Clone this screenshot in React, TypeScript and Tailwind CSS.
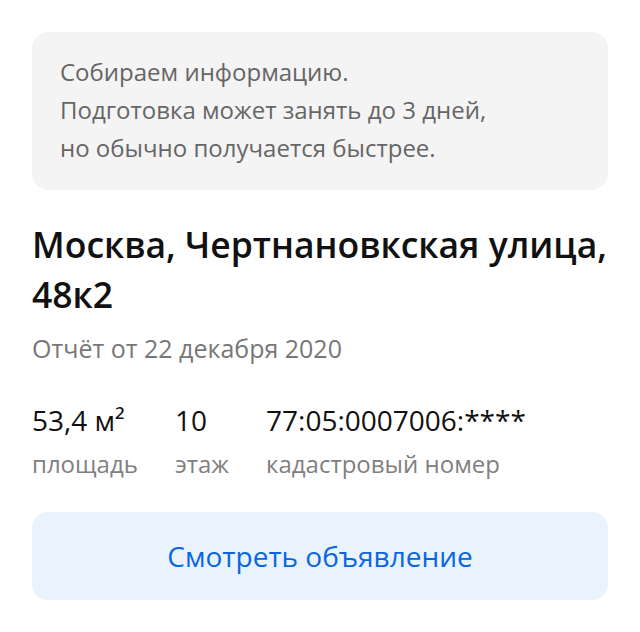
// Report card: status note, address, quick facts and a link to the listing

const stats = [
	{ value: "53,4 м²", label: "площадь" },
	{ value: "10", label: "этаж" },
	{ value: "77:05:0007006:****", label: "кадастровый номер" },
];

export default function App() {
	return (
		<div className="min-h-screen bg-white p-8 font-['Open_Sans',_'Noto_Sans',_sans-serif]">
			{/* Status note */}
			<div className="rounded-2xl bg-[#f4f4f4] px-7 pt-[21px] pb-[23px] text-[24px] leading-[38px] text-[#666]">
				<p>Собираем информацию.</p>
				<p>Подготовка может занять до 3 дней,</p>
				<p>но обычно получается быстрее.</p>
			</div>

			{/* Address */}
			<h1 className="mt-[29px] text-[35.5px] font-semibold leading-[50px] text-[#111]">
				Москва, Чертнановкская улица, 48к2
			</h1>
			<p className="mt-[14px] text-[25px] leading-[30px] text-[#777]">
				Отчёт от 22 декабря 2020
			</p>

			{/* Facts */}
			<div className="mt-[41px] flex gap-[37px]">
				{stats.map((s) => (
					<div key={s.label} className="flex flex-col">
						<span className="text-[28px] leading-[32px] text-[#111]">{s.value}</span>
						<span className="mt-[13px] text-[24px] leading-[30px] text-[#808080]">{s.label}</span>
					</div>
				))}
			</div>

			{/* Action */}
			<button className="mt-[33px] flex h-[88px] w-full items-center justify-center rounded-2xl bg-[#e8f3fe] text-[28px] text-[#0a66e0]">
				Смотреть объявление
			</button>
		</div>
	);
}
